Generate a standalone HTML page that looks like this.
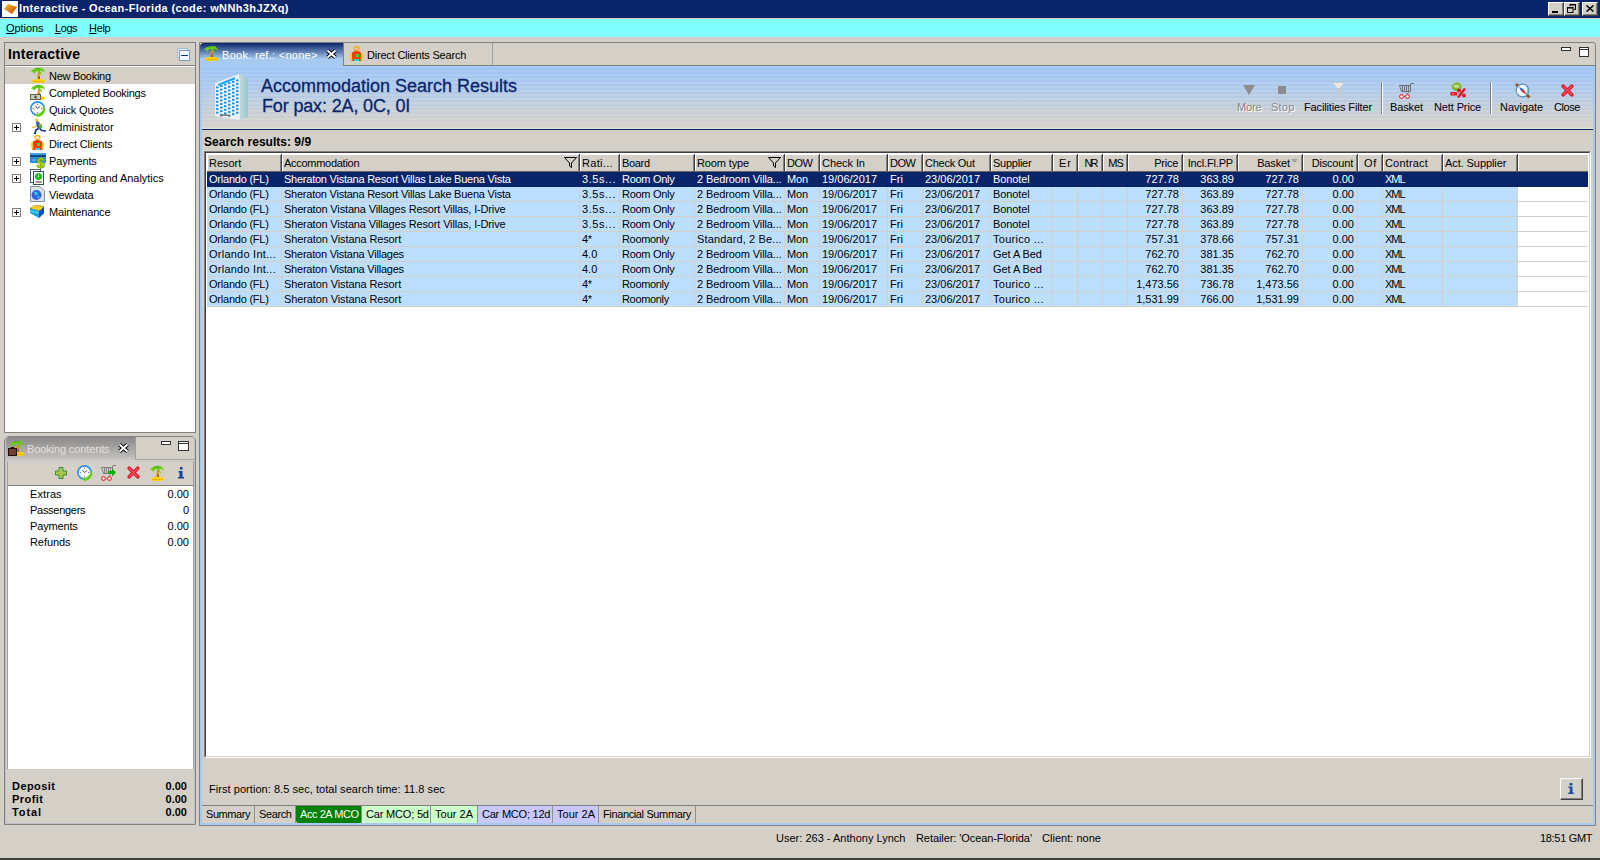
<!DOCTYPE html><html><head><meta charset="utf-8"><style>
*{margin:0;padding:0;box-sizing:border-box}
html,body{width:1600px;height:860px;overflow:hidden;background:#d4d0c8;font-family:"Liberation Sans",sans-serif;font-size:11px;color:#000}
.ab{position:absolute}
.t{position:absolute;white-space:pre;line-height:13px}
.ls{letter-spacing:-0.25px}
</style></head><body>
<div class="ab" style="left:0px;top:0px;width:1600px;height:18px;background:#0a246a"></div><div class="ab" style="left:0px;top:18px;width:1600px;height:1px;background:#d4d0c8"></div><div class="ab" style="left:2px;top:1px;width:16px;height:16px;background:#fff"></div><svg class="ab" style="left:3px;top:3px" width="14" height="12" viewBox="0 0 14 12"><defs><linearGradient id="tg" x1="0" y1="0" x2="1" y2="1"><stop offset="0" stop-color="#ffc020"/><stop offset="1" stop-color="#c04000"/></linearGradient></defs><path d="M1 6 L5 1 L14 4 L9 11 Z" fill="url(#tg)"/></svg><div class="t " style="left:19px;top:2px;color:#fff;font-weight:bold;font-size:11px;letter-spacing:0.38px">Interactive - Ocean-Florida (code: wNNh3hJZXq)</div><div class="ab" style="left:1548px;top:2px;width:16px;height:14px;background:#d4d0c8;border-top:1px solid #fff;border-left:1px solid #fff;border-right:1px solid #404040;border-bottom:1px solid #404040;box-shadow:inset -1px -1px 0 #808080"></div><div class="ab" style="left:1564px;top:2px;width:16px;height:14px;background:#d4d0c8;border-top:1px solid #fff;border-left:1px solid #fff;border-right:1px solid #404040;border-bottom:1px solid #404040;box-shadow:inset -1px -1px 0 #808080"></div><div class="ab" style="left:1582px;top:2px;width:16px;height:14px;background:#d4d0c8;border-top:1px solid #fff;border-left:1px solid #fff;border-right:1px solid #404040;border-bottom:1px solid #404040;box-shadow:inset -1px -1px 0 #808080"></div><div class="ab" style="left:1552px;top:11px;width:6px;height:2px;background:#000"></div><svg class="ab" style="left:1567px;top:4px" width="9" height="9" viewBox="0 0 9 9"><path d="M3 0.5 H8.5 V5.5 H7 M3 0 V2" stroke="#000" fill="none"/><rect x="3" y="0" width="6" height="1.5" fill="#000"/><rect x="0.5" y="3.5" width="5.5" height="5" fill="none" stroke="#000"/><rect x="0" y="3" width="6.5" height="1.5" fill="#000"/></svg><svg class="ab" style="left:1586px;top:5px" width="8" height="7" viewBox="0 0 8 7"><path d="M0.5 0.5 L7.5 6.5 M7.5 0.5 L0.5 6.5" stroke="#000" stroke-width="1.5"/></svg><div class="ab" style="left:0px;top:19px;width:1600px;height:18px;background:#80ffff"></div><div class="t " style="left:6px;top:22px;;letter-spacing:-0.07px"><u>O</u>ptions</div><div class="t " style="left:55px;top:22px;;letter-spacing:-0.42px"><u>L</u>ogs</div><div class="t " style="left:89px;top:22px;;letter-spacing:-0.31px"><u>H</u>elp</div><div class="ab" style="left:4px;top:42px;width:192px;height:391px;border:1px solid #808080;background:#fff"></div><div class="ab" style="left:5px;top:43px;width:190px;height:23px;background:#d4d0c8;border-bottom:1px solid #808080"></div><div class="t " style="left:8px;top:46px;font-weight:bold;font-size:14px;line-height:16px;letter-spacing:0.20px">Interactive</div><svg class="ab" style="left:177px;top:48px" width="13" height="13" viewBox="0 0 13 13"><rect x="0.5" y="0.5" width="10" height="9" fill="#dceaf8" stroke="#a8bcd8"/><rect x="2.5" y="2.5" width="10" height="10" fill="#eef6ff" stroke="#8898b8"/><path d="M4 7.5 H11" stroke="#0a3a80" stroke-width="1"/></svg><div class="ab" style="left:5px;top:67px;width:190px;height:17px;background:#d4d0c8"></div><div class="t " style="left:49px;top:70px;;letter-spacing:-0.28px">New Booking</div><svg class="ab" style="left:30px;top:67px" width="16" height="16" viewBox="0 0 16 16"><path d="M8 15 L9 5" stroke="#e09000" stroke-width="2"/><path d="M9 9 L9.5 12" stroke="#a04000" stroke-width="1"/><path d="M1 5 Q3 1 8 2 Q6 0 10 1 Q14 1 15 6 Q12 3 10 4 Q12 6 12 9 Q9 5 8 4 Q5 4 4 8 Q4 4 1 5Z" fill="#66cc11"/><path d="M5 2 Q8 1 10 2" stroke="#44aa00" stroke-width="1" fill="none"/><ellipse cx="8.5" cy="14" rx="7" ry="2" fill="#ffd400"/><path d="M3 14.5 H14" stroke="#f0b000" stroke-width="1"/></svg><div class="t " style="left:49px;top:87px;;letter-spacing:-0.27px">Completed Bookings</div><svg class="ab" style="left:30px;top:84px" width="16" height="16" viewBox="0 0 16 16"><path d="M8 15 L9 5" stroke="#e09000" stroke-width="2"/><path d="M9 9 L9.5 12" stroke="#a04000" stroke-width="1"/><path d="M1 5 Q3 1 8 2 Q6 0 10 1 Q14 1 15 6 Q12 3 10 4 Q12 6 12 9 Q9 5 8 4 Q5 4 4 8 Q4 4 1 5Z" fill="#66cc11"/><path d="M5 2 Q8 1 10 2" stroke="#44aa00" stroke-width="1" fill="none"/><ellipse cx="8.5" cy="14" rx="7" ry="2" fill="#ffd400"/><path d="M3 14.5 H14" stroke="#f0b000" stroke-width="1"/></svg><svg class="ab" style="left:30px;top:94px" width="11" height="6" viewBox="0 0 11 6"><rect x="0.5" y="0.5" width="10" height="5" fill="#c8ccb0" stroke="#606050"/><circle cx="5.5" cy="3" r="1.5" fill="#606050"/></svg><div class="t " style="left:49px;top:104px;;letter-spacing:-0.19px">Quick Quotes</div><svg class="ab" style="left:30px;top:101px" width="16" height="16" viewBox="0 0 16 16"><circle cx="7.5" cy="7.5" r="6.6" fill="#fff" stroke="#1e90ff" stroke-width="1.6"/><circle cx="7.5" cy="7.5" r="5.2" fill="#f6f6f6" stroke="#e8d8d0" stroke-width="0.6"/><path d="M7.5 2.8 V3.8 M7.5 11.2 V12.2 M2.8 7.5 H3.8 M11.2 7.5 H12.2" stroke="#505050" stroke-width="0.9"/><path d="M7.5 7.5 L5.5 5 M7.5 7.5 L10 5.5" stroke="#404040" stroke-width="0.9"/><path d="M4 12 Q9 15 13 9 L13.2 4.5 L15.5 9 Q13 15.5 8.5 15.8 L7.5 16 Z" fill="#60d010"/></svg><div class="t " style="left:49px;top:121px;;letter-spacing:-0.02px">Administrator</div><svg class="ab" style="left:30px;top:118px" width="16" height="16" viewBox="0 0 16 16"><path d="M4.5 1 L7.5 0.5 L8.5 3 L6 4Z" fill="#f8c820"/><path d="M6 3.5 L9 3.5 L11 9 L8.5 11 L6.5 8Z" fill="#4050b0"/><path d="M8.5 5 L11.5 6 L12.5 9 L10.5 11 L9 9Z" fill="#50b030"/><path d="M9 4 L10.5 5.5 L10 8" stroke="#e8c030" stroke-width="1" fill="none"/><path d="M2 9.5 L5 9 L6.5 7.5" stroke="#f8b020" stroke-width="1.2" fill="none"/><path d="M8.5 10.5 L6 12 L5 15.5 M9.5 10.5 L12 12.5 L16 13" stroke="#102890" stroke-width="1.6" fill="none"/><rect x="4" y="14.5" width="2" height="1.5" fill="#102890"/></svg><div class="ab" style="left:12px;top:123px;width:9px;height:9px;border:1px solid #808080;background:#fff"></div><div class="ab" style="left:14px;top:127px;width:5px;height:1px;background:#000"></div><div class="ab" style="left:16px;top:125px;width:1px;height:5px;background:#000"></div><div class="t " style="left:49px;top:138px;;letter-spacing:-0.14px">Direct Clients</div><svg class="ab" style="left:30px;top:135px" width="16" height="16" viewBox="0 0 16 16"><ellipse cx="7.5" cy="2.5" rx="2.5" ry="1.8" fill="none" stroke="#f8a800" stroke-width="1.2"/><path d="M2.5 8 Q3 5 7.5 5 Q12 5 12.5 8 L12.5 15 L2.5 15Z" fill="#ff3a00"/><path d="M1 9 Q1 6.5 2.5 6.5 L3.5 14.5 L1.5 13Z M14 9 Q14 6.5 12.5 6.5 L11.5 14.5 L13.5 13Z" fill="#ffd000"/><rect x="7" y="8" width="3" height="3" fill="#20e040"/><rect x="5" y="13" width="5" height="2" fill="#20d8d0"/></svg><div class="t " style="left:49px;top:155px;;letter-spacing:-0.16px">Payments</div><svg class="ab" style="left:30px;top:152px" width="17" height="17" viewBox="0 0 17 17"><rect x="0" y="1" width="16" height="10" rx="1" fill="#2b8be0"/><rect x="0" y="1" width="16" height="1.5" fill="#40a8f8"/><rect x="0" y="3" width="16" height="2" fill="#124a80"/><path d="M2 8 H6" stroke="#80c0f0"/><text x="6.5" y="15.5" font-family="Liberation Sans" font-weight="bold" font-size="15" fill="#b8e000" stroke="#6a9000" stroke-width="0.5">$</text></svg><div class="ab" style="left:12px;top:157px;width:9px;height:9px;border:1px solid #808080;background:#fff"></div><div class="ab" style="left:14px;top:161px;width:5px;height:1px;background:#000"></div><div class="ab" style="left:16px;top:159px;width:1px;height:5px;background:#000"></div><div class="t " style="left:49px;top:172px;;letter-spacing:-0.04px">Reporting and Analytics</div><svg class="ab" style="left:30px;top:169px" width="16" height="16" viewBox="0 0 16 16"><rect x="0.5" y="0.5" width="10" height="13" fill="#fff" stroke="#406070"/><rect x="3.5" y="2.5" width="10" height="13" fill="#fff" stroke="#305060"/><circle cx="8.5" cy="7.5" r="3.5" fill="#18c018"/><path d="M8.5 5.5 V8" stroke="#fff" stroke-width="1"/><path d="M5.5 13 H12" stroke="#503020" stroke-width="1"/></svg><div class="ab" style="left:12px;top:174px;width:9px;height:9px;border:1px solid #808080;background:#fff"></div><div class="ab" style="left:14px;top:178px;width:5px;height:1px;background:#000"></div><div class="ab" style="left:16px;top:176px;width:1px;height:5px;background:#000"></div><div class="t " style="left:49px;top:189px;;letter-spacing:-0.05px">Viewdata</div><svg class="ab" style="left:30px;top:186px" width="16" height="16" viewBox="0 0 16 16"><path d="M0.5 0.5 H10 L14.5 5 V15.5 H0.5Z" fill="#dde4f0" stroke="#8090a0"/><circle cx="6.5" cy="9" r="5" fill="#3060e0"/><path d="M4 6 Q6 5 8 7 Q7 10 5 9Z M8 9 Q10 10 9 13 Q7 12 8 9Z" fill="#30d0d0"/></svg><div class="t " style="left:49px;top:206px;;letter-spacing:-0.14px">Maintenance</div><svg class="ab" style="left:30px;top:203px" width="16" height="16" viewBox="0 0 16 16"><path d="M0 5 L5 2 L14 3 L14 10 L9 15 L0 10Z" fill="#1a9ae0"/><path d="M9 8 L14 4 L14 10 L9 15Z" fill="#0a50c0"/><path d="M0 5 L5 2 L14 3 L9 8Z" fill="#f8b000"/><path d="M2 5 L12 6 M3 3.5 L12 4.5" stroke="#ffe040" stroke-width="1"/><path d="M0 7 L9 9 L9 11 L0 9Z" fill="#40d0f0"/></svg><div class="ab" style="left:12px;top:208px;width:9px;height:9px;border:1px solid #808080;background:#fff"></div><div class="ab" style="left:14px;top:212px;width:5px;height:1px;background:#000"></div><div class="ab" style="left:16px;top:210px;width:1px;height:5px;background:#000"></div><div class="ab" style="left:4px;top:436px;width:192px;height:389px;border:1px solid #808080;border-radius:5px 5px 0 0;background:#d4d0c8"></div><div class="ab" style="left:5px;top:437px;width:190px;height:387px;border-left:1px solid #c0c0cc;border-right:1px solid #c0c0cc;border-bottom:1px solid #c0c0cc;border-radius:4px 4px 0 0;background:#d4d0c8"></div><div class="ab" style="left:6px;top:437px;width:130px;height:23px;background:linear-gradient(#8a8888,#b4b2b0 70%,#c8c6c2);border-radius:4px 0 0 0"></div><div class="ab" style="left:135px;top:459px;width:59px;height:1px;background:#a0a0a0"></div><div class="ab" style="left:135px;top:438px;width:1px;height:22px;background:#a0a0a0"></div><svg class="ab" style="left:9px;top:440px" width="16" height="16" viewBox="0 0 16 16"><path d="M8 15 L9 5" stroke="#e09000" stroke-width="2"/><path d="M9 9 L9.5 12" stroke="#a04000" stroke-width="1"/><path d="M1 5 Q3 1 8 2 Q6 0 10 1 Q14 1 15 6 Q12 3 10 4 Q12 6 12 9 Q9 5 8 4 Q5 4 4 8 Q4 4 1 5Z" fill="#66cc11"/><path d="M5 2 Q8 1 10 2" stroke="#44aa00" stroke-width="1" fill="none"/><ellipse cx="8.5" cy="14" rx="7" ry="2" fill="#ffd400"/><path d="M3 14.5 H14" stroke="#f0b000" stroke-width="1"/></svg><svg class="ab" style="left:8px;top:447px" width="9" height="9" viewBox="0 0 9 9"><rect x="0.5" y="1.5" width="8" height="7" fill="#704030" stroke="#201008"/><path d="M3 1.5 V0.5 H6 V1.5" stroke="#201008" fill="none"/></svg><div class="t " style="left:27px;top:443px;color:#e4e0da;letter-spacing:-0.12px">Booking contents</div><svg class="ab" style="left:118px;top:443px" width="11" height="10" viewBox="0 0 11 10"><path d="M1.5 1.5 L9.5 8.5 M9.5 1.5 L1.5 8.5" stroke="#000" stroke-width="3.8"/><path d="M1.5 1.5 L9.5 8.5 M9.5 1.5 L1.5 8.5" stroke="#fff" stroke-width="2"/></svg><div class="ab" style="left:161px;top:441px;width:10px;height:4px;border:1px solid #303030;background:#fff"></div><div class="ab" style="left:178px;top:441px;width:11px;height:10px;border:1px solid #303030;background:#fff;box-shadow:inset 0 1px 0 #fff,inset 0 2px 0 #303030"></div><div class="ab" style="left:7px;top:461px;width:187px;height:25px;border-top:1px solid #c8c8c8;border-left:1px solid #a0a0a0;border-right:1px solid #a0a0a0;border-bottom:1px solid #808080;background:#d4d0c8"></div><svg class="ab" style="left:55px;top:467px" width="12" height="12" viewBox="0 0 12 12"><path d="M4 0.5 H8 V4 H11.5 V8 H8 V11.5 H4 V8 H0.5 V4 H4Z" fill="#a8c848" stroke="#3a8a3a"/></svg><svg class="ab" style="left:77px;top:465px" width="16" height="16" viewBox="0 0 16 16"><circle cx="7.5" cy="7.5" r="6.6" fill="#fff" stroke="#1e90ff" stroke-width="1.6"/><circle cx="7.5" cy="7.5" r="5.2" fill="#f6f6f6" stroke="#e8d8d0" stroke-width="0.6"/><path d="M7.5 2.8 V3.8 M7.5 11.2 V12.2 M2.8 7.5 H3.8 M11.2 7.5 H12.2" stroke="#505050" stroke-width="0.9"/><path d="M7.5 7.5 L5.5 5 M7.5 7.5 L10 5.5" stroke="#404040" stroke-width="0.9"/><path d="M4 12 Q9 15 13 9 L13.2 4.5 L15.5 9 Q13 15.5 8.5 15.8 L7.5 16 Z" fill="#60d010"/></svg><svg class="ab" style="left:101px;top:465px" width="16" height="16" viewBox="0 0 16 16"><path d="M0.5 2.5 H11.5 V8.5 H2.5 Z" fill="none" stroke="#808080"/><path d="M3.5 3 V8 M5.5 3 V8 M7.5 3 V8 M9.5 3 V8" stroke="#808080"/><path d="M11.5 8.5 V1 L12 0.5 H15" stroke="#808080" fill="none"/><path d="M9.5 9 L8.5 11" stroke="#808080"/><circle cx="2.5" cy="13.5" r="1.9" fill="#fff" stroke="#e00000" stroke-width="1"/><circle cx="8.5" cy="13.5" r="1.9" fill="#fff" stroke="#e00000" stroke-width="1"/><path d="M4.2 13.5 H6.8" stroke="#808080"/><path d="M7 6 H11 V3.5 L15 7.5 L11 11.5 V9 H7Z" fill="#00b000"/></svg><svg class="ab" style="left:127px;top:466px" width="13" height="13" viewBox="0 0 13 13"><path d="M2.2 2.2 L10.8 10.8 M10.8 2.2 L2.2 10.8" stroke="#d81830" stroke-width="3.6" stroke-linecap="round"/><path d="M2.5 2.5 L10.5 10.5 M10.5 2.5 L2.5 10.5" stroke="#f04858" stroke-width="1.6" stroke-linecap="round"/></svg><svg class="ab" style="left:149px;top:465px" width="16" height="16" viewBox="0 0 16 16"><path d="M8 15 L9 5" stroke="#e09000" stroke-width="2"/><path d="M9 9 L9.5 12" stroke="#a04000" stroke-width="1"/><path d="M1 5 Q3 1 8 2 Q6 0 10 1 Q14 1 15 6 Q12 3 10 4 Q12 6 12 9 Q9 5 8 4 Q5 4 4 8 Q4 4 1 5Z" fill="#66cc11"/><path d="M5 2 Q8 1 10 2" stroke="#44aa00" stroke-width="1" fill="none"/><ellipse cx="8.5" cy="14" rx="7" ry="2" fill="#ffd400"/><path d="M3 14.5 H14" stroke="#f0b000" stroke-width="1"/></svg><svg class="ab" style="left:178px;top:467px" width="6" height="12" viewBox="0 0 6 12"><rect x="2" y="0" width="2.5" height="2.5" fill="#1040a0"/><path d="M0.5 4 H4.5 V10 H6 V11.5 H0 V10 H1.5 V5.5 H0.5Z" fill="#1040a0"/></svg><div class="ab" style="left:7px;top:486px;width:187px;height:283px;background:#fff;border-left:1px solid #a0a0a0;border-right:1px solid #a0a0a0"></div><div class="t " style="left:30px;top:488px;;letter-spacing:0.08px">Extras</div><div class="t " style="left:129px;top:488px;width:60px;text-align:right">0.00</div><div class="t " style="left:30px;top:504px;;letter-spacing:-0.28px">Passengers</div><div class="t " style="left:129px;top:504px;width:60px;text-align:right">0</div><div class="t " style="left:30px;top:520px;;letter-spacing:-0.16px">Payments</div><div class="t " style="left:129px;top:520px;width:60px;text-align:right">0.00</div><div class="t " style="left:30px;top:536px;;letter-spacing:-0.07px">Refunds</div><div class="t " style="left:129px;top:536px;width:60px;text-align:right">0.00</div><div class="t " style="left:12px;top:780px;font-weight:bold;letter-spacing:0.44px">Deposit</div><div class="t " style="left:127px;top:780px;font-weight:bold;width:60px;text-align:right">0.00</div><div class="t " style="left:12px;top:793px;font-weight:bold;letter-spacing:0.46px">Profit</div><div class="t " style="left:127px;top:793px;font-weight:bold;width:60px;text-align:right">0.00</div><div class="t " style="left:12px;top:806px;font-weight:bold;letter-spacing:0.88px">Total</div><div class="t " style="left:127px;top:806px;font-weight:bold;width:60px;text-align:right">0.00</div><div class="ab" style="left:199px;top:42px;width:1397px;height:784px;border:1px solid #808080;border-radius:0 3px 0 0;background:#d4d0c8"></div><div class="ab" style="left:200px;top:66px;width:1395px;height:759px;border:2px solid #a6caf0;border-top:none;background:#d4d0c8"></div><div class="ab" style="left:200px;top:43px;width:143px;height:23px;background:linear-gradient(#0a246a 0px,#a6caf0 16px,#a6caf0);border-radius:4px 0 0 0"></div><svg class="ab" style="left:203px;top:45px" width="16" height="16" viewBox="0 0 16 16"><path d="M8 15 L9 5" stroke="#e09000" stroke-width="2"/><path d="M9 9 L9.5 12" stroke="#a04000" stroke-width="1"/><path d="M1 5 Q3 1 8 2 Q6 0 10 1 Q14 1 15 6 Q12 3 10 4 Q12 6 12 9 Q9 5 8 4 Q5 4 4 8 Q4 4 1 5Z" fill="#66cc11"/><path d="M5 2 Q8 1 10 2" stroke="#44aa00" stroke-width="1" fill="none"/><ellipse cx="8.5" cy="14" rx="7" ry="2" fill="#ffd400"/><path d="M3 14.5 H14" stroke="#f0b000" stroke-width="1"/></svg><div class="t " style="left:222px;top:49px;color:#fff;letter-spacing:0.2px;letter-spacing:0.29px">Book. ref.: &lt;none&gt;</div><svg class="ab" style="left:326px;top:49px" width="11" height="10" viewBox="0 0 11 10"><path d="M1.5 1.5 L9.5 8.5 M9.5 1.5 L1.5 8.5" stroke="#000" stroke-width="3.8"/><path d="M1.5 1.5 L9.5 8.5 M9.5 1.5 L1.5 8.5" stroke="#fff" stroke-width="2"/></svg><div class="ab" style="left:343px;top:43px;width:1px;height:22px;background:#808080"></div><svg class="ab" style="left:349px;top:46px" width="16" height="16" viewBox="0 0 16 16"><ellipse cx="7.5" cy="2.5" rx="2.5" ry="1.8" fill="none" stroke="#f8a800" stroke-width="1.2"/><path d="M2.5 8 Q3 5 7.5 5 Q12 5 12.5 8 L12.5 15 L2.5 15Z" fill="#ff3a00"/><path d="M1 9 Q1 6.5 2.5 6.5 L3.5 14.5 L1.5 13Z M14 9 Q14 6.5 12.5 6.5 L11.5 14.5 L13.5 13Z" fill="#ffd000"/><rect x="7" y="8" width="3" height="3" fill="#20e040"/><rect x="5" y="13" width="5" height="2" fill="#20d8d0"/></svg><div class="t " style="left:367px;top:49px;;letter-spacing:-0.20px">Direct Clients Search</div><div class="ab" style="left:492px;top:43px;width:1px;height:22px;background:#a0a0a0"></div><div class="ab" style="left:343px;top:65px;width:1252px;height:1px;background:#808080"></div><div class="ab" style="left:1561px;top:47px;width:10px;height:4px;border:1px solid #303030;background:#fff"></div><div class="ab" style="left:1579px;top:47px;width:10px;height:10px;border:1px solid #303030;background:#fff;box-shadow:inset 0 1px 0 #fff,inset 0 2px 0 #303030"></div><div class="ab" style="left:202px;top:66px;width:1391px;height:63px;background:repeating-linear-gradient(rgba(255,255,255,0.05) 0 2px,rgba(0,0,0,0.02) 2px 4px),linear-gradient(#a0c8f8 0%,#b0ccf0 30%,#c0d0e2 55%,#d0d2d4 80%,#d8d4cc 100%)"></div><div class="ab" style="left:202px;top:128px;width:1391px;height:1px;background:#e6e2dc"></div><div class="ab" style="left:202px;top:129px;width:1391px;height:1px;background:#0a246a"></div><svg class="ab" style="left:214px;top:74px" width="34" height="46" viewBox="0 0 34 46"><defs><linearGradient id="bside" x1="0" y1="0" x2="1" y2="0"><stop offset="0" stop-color="#c8d8dc"/><stop offset="1" stop-color="#98c8d0"/></linearGradient></defs><path d="M1 9 L25 0 L25 46 L1 42Z" fill="#e8eef2"/><path d="M25 0 L34 5 L34 43 L25 46Z" fill="url(#bside)"/><path d="M4 10 L21 3 L21 5.5 L4 12Z" fill="#20a8f0"/><rect x="2" y="12.5" width="2.6" height="1.8" fill="#1890e0"/><rect x="2" y="16.1" width="2.6" height="1.8" fill="#1890e0"/><rect x="2" y="19.7" width="2.6" height="1.8" fill="#1890e0"/><rect x="2" y="23.3" width="2.6" height="1.8" fill="#1890e0"/><rect x="2" y="26.9" width="2.6" height="1.8" fill="#1890e0"/><rect x="2" y="30.5" width="2.6" height="1.8" fill="#1890e0"/><rect x="2" y="34.1" width="2.6" height="1.8" fill="#1890e0"/><rect x="2" y="37.7" width="2.6" height="1.8" fill="#1890e0"/><path d="M5.3 12.0 V43.0" stroke="#ffffff" stroke-width="0.8"/><rect x="6" y="11.1" width="2.6" height="1.8" fill="#1890e0"/><rect x="6" y="14.7" width="2.6" height="1.8" fill="#1890e0"/><rect x="6" y="18.3" width="2.6" height="1.8" fill="#1890e0"/><rect x="6" y="21.9" width="2.6" height="1.8" fill="#1890e0"/><rect x="6" y="25.5" width="2.6" height="1.8" fill="#1890e0"/><rect x="6" y="29.1" width="2.6" height="1.8" fill="#1890e0"/><rect x="6" y="32.7" width="2.6" height="1.8" fill="#1890e0"/><rect x="6" y="36.3" width="2.6" height="1.8" fill="#1890e0"/><rect x="6" y="39.9" width="2.6" height="1.8" fill="#1890e0"/><path d="M9.3 10.6 V43.5" stroke="#ffffff" stroke-width="0.8"/><rect x="10" y="9.7" width="2.6" height="1.8" fill="#1890e0"/><rect x="10" y="13.3" width="2.6" height="1.8" fill="#1890e0"/><rect x="10" y="16.9" width="2.6" height="1.8" fill="#1890e0"/><rect x="10" y="20.5" width="2.6" height="1.8" fill="#1890e0"/><rect x="10" y="24.1" width="2.6" height="1.8" fill="#1890e0"/><rect x="10" y="27.7" width="2.6" height="1.8" fill="#1890e0"/><rect x="10" y="31.3" width="2.6" height="1.8" fill="#1890e0"/><rect x="10" y="34.9" width="2.6" height="1.8" fill="#1890e0"/><rect x="10" y="38.5" width="2.6" height="1.8" fill="#1890e0"/><path d="M13.3 9.2 V44.0" stroke="#ffffff" stroke-width="0.8"/><rect x="14" y="8.3" width="2.6" height="1.8" fill="#1890e0"/><rect x="14" y="11.9" width="2.6" height="1.8" fill="#1890e0"/><rect x="14" y="15.5" width="2.6" height="1.8" fill="#1890e0"/><rect x="14" y="19.1" width="2.6" height="1.8" fill="#1890e0"/><rect x="14" y="22.7" width="2.6" height="1.8" fill="#1890e0"/><rect x="14" y="26.3" width="2.6" height="1.8" fill="#1890e0"/><rect x="14" y="29.9" width="2.6" height="1.8" fill="#1890e0"/><rect x="14" y="33.5" width="2.6" height="1.8" fill="#1890e0"/><rect x="14" y="37.1" width="2.6" height="1.8" fill="#1890e0"/><rect x="14" y="40.7" width="2.6" height="1.8" fill="#1890e0"/><path d="M17.3 7.8 V44.5" stroke="#ffffff" stroke-width="0.8"/><rect x="18" y="6.9" width="2.6" height="1.8" fill="#1890e0"/><rect x="18" y="10.5" width="2.6" height="1.8" fill="#1890e0"/><rect x="18" y="14.1" width="2.6" height="1.8" fill="#1890e0"/><rect x="18" y="17.7" width="2.6" height="1.8" fill="#1890e0"/><rect x="18" y="21.3" width="2.6" height="1.8" fill="#1890e0"/><rect x="18" y="24.9" width="2.6" height="1.8" fill="#1890e0"/><rect x="18" y="28.5" width="2.6" height="1.8" fill="#1890e0"/><rect x="18" y="32.1" width="2.6" height="1.8" fill="#1890e0"/><rect x="18" y="35.7" width="2.6" height="1.8" fill="#1890e0"/><rect x="18" y="39.3" width="2.6" height="1.8" fill="#1890e0"/><path d="M21.3 6.4 V45.0" stroke="#ffffff" stroke-width="0.8"/><rect x="22" y="5.5" width="2.6" height="1.8" fill="#1890e0"/><rect x="22" y="9.1" width="2.6" height="1.8" fill="#1890e0"/><rect x="22" y="12.7" width="2.6" height="1.8" fill="#1890e0"/><rect x="22" y="16.3" width="2.6" height="1.8" fill="#1890e0"/><rect x="22" y="19.9" width="2.6" height="1.8" fill="#1890e0"/><rect x="22" y="23.5" width="2.6" height="1.8" fill="#1890e0"/><rect x="22" y="27.1" width="2.6" height="1.8" fill="#1890e0"/><rect x="22" y="30.7" width="2.6" height="1.8" fill="#1890e0"/><rect x="22" y="34.3" width="2.6" height="1.8" fill="#1890e0"/><rect x="22" y="37.9" width="2.6" height="1.8" fill="#1890e0"/><path d="M25.3 5.0 V45.5" stroke="#ffffff" stroke-width="0.8"/><path d="M6 42 Q11 40 16 42" stroke="#707070" stroke-width="1.5" fill="none"/></svg><div class="t " style="left:261px;top:76px;font-size:18px;line-height:20px;color:#0a246a;-webkit-text-stroke:0.3px #0a246a">Accommodation Search Results</div><div class="t " style="left:262px;top:96px;font-size:18px;line-height:20px;color:#0a246a;letter-spacing:-0.15px;-webkit-text-stroke:0.3px #0a246a">For pax: 2A, 0C, 0I</div><div class="t " style="left:204px;top:135px;font-weight:bold;font-size:12px;line-height:14px;letter-spacing:0.02px">Search results: 9/9</div><div class="t " style="left:1237px;top:101px;text-shadow:1px 1px 0 #fff;color:#868686;;letter-spacing:-0.15px">More</div><div class="t " style="left:1271px;top:101px;text-shadow:1px 1px 0 #fff;color:#868686;;letter-spacing:0.21px">Stop</div><div class="t " style="left:1304px;top:101px;;letter-spacing:-0.14px">Facilities Filter</div><div class="t " style="left:1390px;top:101px;;letter-spacing:-0.13px">Basket</div><div class="t " style="left:1434px;top:101px;;letter-spacing:-0.12px">Nett Price</div><div class="t " style="left:1500px;top:101px;;letter-spacing:-0.03px">Navigate</div><div class="t " style="left:1554px;top:101px;;letter-spacing:-0.43px">Close</div><svg class="ab" style="left:1243px;top:85px" width="12" height="10" viewBox="0 0 12 10"><path d="M0 0 H12 L6 10Z" fill="#8c8c8c"/></svg><div class="ab" style="left:1278px;top:86px;width:8px;height:8px;background:#8c8c8c"></div><svg class="ab" style="left:1332px;top:82px" width="13" height="16" viewBox="0 0 13 16"><path d="M0 0 H13 L8 7 V16 L5 14 V7Z" fill="#c8c8c8"/><path d="M1 1 H12 L7.5 6 H5.5Z" fill="#e8e8e8"/></svg><div class="ab" style="left:1381px;top:82px;width:2px;height:32px;background:#808080;border-right:1px solid #fff"></div><svg class="ab" style="left:1399px;top:83px" width="16" height="16" viewBox="0 0 16 16"><path d="M0.5 2.5 H11.5 V8.5 H2.5 Z" fill="none" stroke="#707070"/><path d="M3.5 3 V8 M5.5 3 V8 M7.5 3 V8 M9.5 3 V8" stroke="#707070"/><path d="M11.5 8.5 V1 L12 0.5 H15" stroke="#707070" fill="none"/><path d="M9.5 9 L8.5 11" stroke="#707070"/><circle cx="2.5" cy="13.5" r="1.9" fill="#fff" stroke="#e00000" stroke-width="1"/><circle cx="8.5" cy="13.5" r="1.9" fill="#fff" stroke="#e00000" stroke-width="1"/><path d="M4.2 13.5 H6.8" stroke="#707070"/></svg><svg class="ab" style="left:1450px;top:82px" width="17" height="16" viewBox="0 0 17 16"><path d="M1.5 4 Q4 0 8 0.5 Q12 1.5 11.5 5 Q10 9 6 9 Q2 8.5 1.5 4Z" fill="#80b828"/><ellipse cx="6.5" cy="4.2" rx="3" ry="1.6" fill="#c0e088"/><rect x="0.5" y="10" width="6.5" height="3.5" fill="#e81020"/><rect x="2" y="11.2" width="2.5" height="1" fill="#ff9090"/><circle cx="9" cy="8.5" r="2" fill="#e81020"/><circle cx="14" cy="13.5" r="2" fill="#e81020"/><path d="M15 6.5 L8 15.5" stroke="#e81020" stroke-width="2.4"/></svg><div class="ab" style="left:1490px;top:82px;width:2px;height:32px;background:#808080;border-right:1px solid #fff"></div><svg class="ab" style="left:1514px;top:82px" width="17" height="17" viewBox="0 0 17 17"><circle cx="8.5" cy="8.5" r="6.3" fill="#f2f6fa" stroke="#5a90c8" stroke-width="1.2"/><path d="M13 5 A5 5 0 0 1 12 12" stroke="#30c8f0" stroke-width="1.2" fill="none"/><path d="M4.8 4.8 L9.8 7.6 L7.6 9.8Z" fill="#2068d0"/><path d="M12.4 12.4 L9.8 7.6 L7.6 9.8Z" fill="#f02010"/><path d="M1 3 L3 1 L5 3 L3 5Z" fill="#8a5a20"/><path d="M12 14 L14 12 L16.5 14.5 L14.5 16.5Z" fill="#8a5a20"/></svg><svg class="ab" style="left:1561px;top:84px" width="13" height="13" viewBox="0 0 13 13"><path d="M2.2 2.2 L10.8 10.8 M10.8 2.2 L2.2 10.8" stroke="#d81830" stroke-width="3.6" stroke-linecap="round"/><path d="M2.5 2.5 L10.5 10.5 M10.5 2.5 L2.5 10.5" stroke="#f04858" stroke-width="1.6" stroke-linecap="round"/></svg><div class="ab" style="left:204px;top:151px;width:1387px;height:607px;border-top:1px solid #808080;border-left:1px solid #808080;border-right:1px solid #fff;border-bottom:1px solid #fff;background:#fff"></div><div class="ab" style="left:205px;top:152px;width:1385px;height:605px;border-top:1px solid #404040;border-left:1px solid #404040;border-right:1px solid #d4d0c8;border-bottom:1px solid #d4d0c8;background:#fff"></div><div class="ab" style="left:206px;top:153px;width:1382px;height:2px;background:#fff"></div><div class="ab" style="left:206px;top:153px;width:1px;height:19px;background:#fff"></div><div class="ab" style="left:207px;top:154px;width:75px;height:18px;background:#d4d0c8;border-top:1px solid #fff;border-left:1px solid #fff;border-bottom:1px solid #9a968e"></div><div class="ab" style="left:280px;top:155px;width:1px;height:16px;background:#808080"></div><div class="ab" style="left:281px;top:154px;width:1px;height:18px;background:#404040"></div><div class="ab" style="left:207px;top:171px;width:75px;height:1px;background:#686460"></div><div class="t " style="left:209px;top:157px;;letter-spacing:-0.03px">Resort</div><div class="ab" style="left:282px;top:154px;width:298px;height:18px;background:#d4d0c8;border-top:1px solid #fff;border-left:1px solid #fff;border-bottom:1px solid #9a968e"></div><div class="ab" style="left:578px;top:155px;width:1px;height:16px;background:#808080"></div><div class="ab" style="left:579px;top:154px;width:1px;height:18px;background:#404040"></div><div class="ab" style="left:282px;top:171px;width:298px;height:1px;background:#686460"></div><div class="t " style="left:284px;top:157px;;letter-spacing:-0.28px">Accommodation</div><div class="ab" style="left:580px;top:154px;width:40px;height:18px;background:#d4d0c8;border-top:1px solid #fff;border-left:1px solid #fff;border-bottom:1px solid #9a968e"></div><div class="ab" style="left:618px;top:155px;width:1px;height:16px;background:#808080"></div><div class="ab" style="left:619px;top:154px;width:1px;height:18px;background:#404040"></div><div class="ab" style="left:580px;top:171px;width:40px;height:1px;background:#686460"></div><div class="t " style="left:582px;top:157px;;letter-spacing:0.31px">Rati...</div><div class="ab" style="left:620px;top:154px;width:75px;height:18px;background:#d4d0c8;border-top:1px solid #fff;border-left:1px solid #fff;border-bottom:1px solid #9a968e"></div><div class="ab" style="left:693px;top:155px;width:1px;height:16px;background:#808080"></div><div class="ab" style="left:694px;top:154px;width:1px;height:18px;background:#404040"></div><div class="ab" style="left:620px;top:171px;width:75px;height:1px;background:#686460"></div><div class="t " style="left:622px;top:157px;;letter-spacing:-0.32px">Board</div><div class="ab" style="left:695px;top:154px;width:90px;height:18px;background:#d4d0c8;border-top:1px solid #fff;border-left:1px solid #fff;border-bottom:1px solid #9a968e"></div><div class="ab" style="left:783px;top:155px;width:1px;height:16px;background:#808080"></div><div class="ab" style="left:784px;top:154px;width:1px;height:18px;background:#404040"></div><div class="ab" style="left:695px;top:171px;width:90px;height:1px;background:#686460"></div><div class="t " style="left:697px;top:157px;;letter-spacing:-0.13px">Room type</div><div class="ab" style="left:785px;top:154px;width:35px;height:18px;background:#d4d0c8;border-top:1px solid #fff;border-left:1px solid #fff;border-bottom:1px solid #9a968e"></div><div class="ab" style="left:818px;top:155px;width:1px;height:16px;background:#808080"></div><div class="ab" style="left:819px;top:154px;width:1px;height:18px;background:#404040"></div><div class="ab" style="left:785px;top:171px;width:35px;height:1px;background:#686460"></div><div class="t " style="left:787px;top:157px;;letter-spacing:-0.44px">DOW</div><div class="ab" style="left:820px;top:154px;width:68px;height:18px;background:#d4d0c8;border-top:1px solid #fff;border-left:1px solid #fff;border-bottom:1px solid #9a968e"></div><div class="ab" style="left:886px;top:155px;width:1px;height:16px;background:#808080"></div><div class="ab" style="left:887px;top:154px;width:1px;height:18px;background:#404040"></div><div class="ab" style="left:820px;top:171px;width:68px;height:1px;background:#686460"></div><div class="t " style="left:822px;top:157px;;letter-spacing:-0.06px">Check In</div><div class="ab" style="left:888px;top:154px;width:35px;height:18px;background:#d4d0c8;border-top:1px solid #fff;border-left:1px solid #fff;border-bottom:1px solid #9a968e"></div><div class="ab" style="left:921px;top:155px;width:1px;height:16px;background:#808080"></div><div class="ab" style="left:922px;top:154px;width:1px;height:18px;background:#404040"></div><div class="ab" style="left:888px;top:171px;width:35px;height:1px;background:#686460"></div><div class="t " style="left:890px;top:157px;;letter-spacing:-0.44px">DOW</div><div class="ab" style="left:923px;top:154px;width:68px;height:18px;background:#d4d0c8;border-top:1px solid #fff;border-left:1px solid #fff;border-bottom:1px solid #9a968e"></div><div class="ab" style="left:989px;top:155px;width:1px;height:16px;background:#808080"></div><div class="ab" style="left:990px;top:154px;width:1px;height:18px;background:#404040"></div><div class="ab" style="left:923px;top:171px;width:68px;height:1px;background:#686460"></div><div class="t ls" style="left:925px;top:157px;">Check Out</div><div class="ab" style="left:991px;top:154px;width:62px;height:18px;background:#d4d0c8;border-top:1px solid #fff;border-left:1px solid #fff;border-bottom:1px solid #9a968e"></div><div class="ab" style="left:1051px;top:155px;width:1px;height:16px;background:#808080"></div><div class="ab" style="left:1052px;top:154px;width:1px;height:18px;background:#404040"></div><div class="ab" style="left:991px;top:171px;width:62px;height:1px;background:#686460"></div><div class="t ls" style="left:993px;top:157px;">Supplier</div><div class="ab" style="left:1053px;top:154px;width:25px;height:18px;background:#d4d0c8;border-top:1px solid #fff;border-left:1px solid #fff;border-bottom:1px solid #9a968e"></div><div class="ab" style="left:1076px;top:155px;width:1px;height:16px;background:#808080"></div><div class="ab" style="left:1077px;top:154px;width:1px;height:18px;background:#404040"></div><div class="ab" style="left:1053px;top:171px;width:25px;height:1px;background:#686460"></div><div class="t " style="left:1053px;top:157px;width:25px;text-align:center;letter-spacing:1.00px">Er</div><div class="ab" style="left:1078px;top:154px;width:25px;height:18px;background:#d4d0c8;border-top:1px solid #fff;border-left:1px solid #fff;border-bottom:1px solid #9a968e"></div><div class="ab" style="left:1101px;top:155px;width:1px;height:16px;background:#808080"></div><div class="ab" style="left:1102px;top:154px;width:1px;height:18px;background:#404040"></div><div class="ab" style="left:1078px;top:171px;width:25px;height:1px;background:#686460"></div><div class="t " style="left:1078px;top:157px;width:25px;text-align:center;letter-spacing:-1.88px">NR</div><div class="ab" style="left:1103px;top:154px;width:25px;height:18px;background:#d4d0c8;border-top:1px solid #fff;border-left:1px solid #fff;border-bottom:1px solid #9a968e"></div><div class="ab" style="left:1126px;top:155px;width:1px;height:16px;background:#808080"></div><div class="ab" style="left:1127px;top:154px;width:1px;height:18px;background:#404040"></div><div class="ab" style="left:1103px;top:171px;width:25px;height:1px;background:#686460"></div><div class="t " style="left:1103px;top:157px;width:25px;text-align:center;letter-spacing:-1.00px">MS</div><div class="ab" style="left:1128px;top:154px;width:55px;height:18px;background:#d4d0c8;border-top:1px solid #fff;border-left:1px solid #fff;border-bottom:1px solid #9a968e"></div><div class="ab" style="left:1181px;top:155px;width:1px;height:16px;background:#808080"></div><div class="ab" style="left:1182px;top:154px;width:1px;height:18px;background:#404040"></div><div class="ab" style="left:1128px;top:171px;width:55px;height:1px;background:#686460"></div><div class="t " style="left:1128px;top:157px;width:50px;text-align:right;letter-spacing:-0.27px">Price</div><div class="ab" style="left:1183px;top:154px;width:55px;height:18px;background:#d4d0c8;border-top:1px solid #fff;border-left:1px solid #fff;border-bottom:1px solid #9a968e"></div><div class="ab" style="left:1236px;top:155px;width:1px;height:16px;background:#808080"></div><div class="ab" style="left:1237px;top:154px;width:1px;height:18px;background:#404040"></div><div class="ab" style="left:1183px;top:171px;width:55px;height:1px;background:#686460"></div><div class="t " style="left:1183px;top:157px;width:50px;text-align:right;letter-spacing:-0.18px">Incl.Fl.PP</div><div class="ab" style="left:1238px;top:154px;width:65px;height:18px;background:#d4d0c8;border-top:1px solid #fff;border-left:1px solid #fff;border-bottom:1px solid #9a968e"></div><div class="ab" style="left:1301px;top:155px;width:1px;height:16px;background:#808080"></div><div class="ab" style="left:1302px;top:154px;width:1px;height:18px;background:#404040"></div><div class="ab" style="left:1238px;top:171px;width:65px;height:1px;background:#686460"></div><div class="t " style="left:1238px;top:157px;width:52px;text-align:right;letter-spacing:-0.13px">Basket</div><div class="ab" style="left:1303px;top:154px;width:55px;height:18px;background:#d4d0c8;border-top:1px solid #fff;border-left:1px solid #fff;border-bottom:1px solid #9a968e"></div><div class="ab" style="left:1356px;top:155px;width:1px;height:16px;background:#808080"></div><div class="ab" style="left:1357px;top:154px;width:1px;height:18px;background:#404040"></div><div class="ab" style="left:1303px;top:171px;width:55px;height:1px;background:#686460"></div><div class="t " style="left:1303px;top:157px;width:50px;text-align:right;letter-spacing:-0.19px">Discount</div><div class="ab" style="left:1358px;top:154px;width:25px;height:18px;background:#d4d0c8;border-top:1px solid #fff;border-left:1px solid #fff;border-bottom:1px solid #9a968e"></div><div class="ab" style="left:1381px;top:155px;width:1px;height:16px;background:#808080"></div><div class="ab" style="left:1382px;top:154px;width:1px;height:18px;background:#404040"></div><div class="ab" style="left:1358px;top:171px;width:25px;height:1px;background:#686460"></div><div class="t " style="left:1358px;top:157px;width:25px;text-align:center;letter-spacing:0.62px">Of</div><div class="ab" style="left:1383px;top:154px;width:60px;height:18px;background:#d4d0c8;border-top:1px solid #fff;border-left:1px solid #fff;border-bottom:1px solid #9a968e"></div><div class="ab" style="left:1441px;top:155px;width:1px;height:16px;background:#808080"></div><div class="ab" style="left:1442px;top:154px;width:1px;height:18px;background:#404040"></div><div class="ab" style="left:1383px;top:171px;width:60px;height:1px;background:#686460"></div><div class="t " style="left:1385px;top:157px;;letter-spacing:0.17px">Contract</div><div class="ab" style="left:1443px;top:154px;width:75px;height:18px;background:#d4d0c8;border-top:1px solid #fff;border-left:1px solid #fff;border-bottom:1px solid #9a968e"></div><div class="ab" style="left:1516px;top:155px;width:1px;height:16px;background:#808080"></div><div class="ab" style="left:1517px;top:154px;width:1px;height:18px;background:#404040"></div><div class="ab" style="left:1443px;top:171px;width:75px;height:1px;background:#686460"></div><div class="t " style="left:1445px;top:157px;;letter-spacing:-0.08px">Act. Supplier</div><div class="ab" style="left:1518px;top:154px;width:70px;height:18px;background:#d4d0c8;border-top:1px solid #fff;border-left:1px solid #fff;border-bottom:1px solid #9a968e"></div><div class="ab" style="left:1518px;top:171px;width:70px;height:1px;background:#686460"></div><svg class="ab" style="left:564px;top:157px" width="13" height="11" viewBox="0 0 13 11"><path d="M0.5 0.5 H12.5 L7.5 6 V10.5 L5.5 9 V6Z" fill="none" stroke="#000"/></svg><svg class="ab" style="left:768px;top:157px" width="13" height="11" viewBox="0 0 13 11"><path d="M0.5 0.5 H12.5 L7.5 6 V10.5 L5.5 9 V6Z" fill="none" stroke="#000"/></svg><svg class="ab" style="left:1291px;top:159px" width="7" height="4" viewBox="0 0 7 4"><path d="M0 0 H7 L3.5 4Z" fill="#a0a0a0"/></svg><div class="ab" style="left:207px;top:172px;width:1381px;height:15px;background:#0a246a"></div><div class="t " style="left:209px;top:172px;line-height:14px;color:#fff;letter-spacing:-0.22px">Orlando (FL)</div><div class="t " style="left:284px;top:172px;line-height:14px;color:#fff;letter-spacing:-0.24px">Sheraton Vistana Resort Villas Lake Buena Vista</div><div class="t " style="left:582px;top:172px;line-height:14px;color:#fff;letter-spacing:0.58px">3.5s...</div><div class="t " style="left:622px;top:172px;line-height:14px;color:#fff;letter-spacing:-0.29px">Room Only</div><div class="t " style="left:697px;top:172px;line-height:14px;color:#fff;letter-spacing:-0.11px">2 Bedroom Villa...</div><div class="t " style="left:787px;top:172px;line-height:14px;color:#fff;letter-spacing:-0.20px">Mon</div><div class="t " style="left:822px;top:172px;line-height:14px;color:#fff">19/06/2017</div><div class="t " style="left:890px;top:172px;line-height:14px;color:#fff;letter-spacing:0.09px">Fri</div><div class="t " style="left:925px;top:172px;line-height:14px;color:#fff">23/06/2017</div><div class="t " style="left:993px;top:172px;line-height:14px;color:#fff;letter-spacing:-0.10px">Bonotel</div><div class="t " style="left:1127px;top:172px;width:52px;text-align:right;line-height:14px;color:#fff">727.78</div><div class="t " style="left:1182px;top:172px;width:52px;text-align:right;line-height:14px;color:#fff">363.89</div><div class="t " style="left:1237px;top:172px;width:62px;text-align:right;line-height:14px;color:#fff">727.78</div><div class="t " style="left:1302px;top:172px;width:52px;text-align:right;line-height:14px;color:#fff">0.00</div><div class="t " style="left:1385px;top:172px;line-height:14px;color:#fff;letter-spacing:-1.06px">XML</div><div class="ab" style="left:207px;top:187px;width:1310px;height:15px;background:#bddfff"></div><div class="ab" style="left:207px;top:201px;width:1381px;height:1px;background:#d4d0c8"></div><div class="ab" style="left:281px;top:187px;width:1px;height:15px;background:#d4d0c8"></div><div class="ab" style="left:579px;top:187px;width:1px;height:15px;background:#d4d0c8"></div><div class="ab" style="left:619px;top:187px;width:1px;height:15px;background:#d4d0c8"></div><div class="ab" style="left:694px;top:187px;width:1px;height:15px;background:#d4d0c8"></div><div class="ab" style="left:784px;top:187px;width:1px;height:15px;background:#d4d0c8"></div><div class="ab" style="left:819px;top:187px;width:1px;height:15px;background:#d4d0c8"></div><div class="ab" style="left:887px;top:187px;width:1px;height:15px;background:#d4d0c8"></div><div class="ab" style="left:922px;top:187px;width:1px;height:15px;background:#d4d0c8"></div><div class="ab" style="left:990px;top:187px;width:1px;height:15px;background:#d4d0c8"></div><div class="ab" style="left:1052px;top:187px;width:1px;height:15px;background:#d4d0c8"></div><div class="ab" style="left:1077px;top:187px;width:1px;height:15px;background:#d4d0c8"></div><div class="ab" style="left:1102px;top:187px;width:1px;height:15px;background:#d4d0c8"></div><div class="ab" style="left:1127px;top:187px;width:1px;height:15px;background:#d4d0c8"></div><div class="ab" style="left:1182px;top:187px;width:1px;height:15px;background:#d4d0c8"></div><div class="ab" style="left:1237px;top:187px;width:1px;height:15px;background:#d4d0c8"></div><div class="ab" style="left:1302px;top:187px;width:1px;height:15px;background:#d4d0c8"></div><div class="ab" style="left:1357px;top:187px;width:1px;height:15px;background:#d4d0c8"></div><div class="ab" style="left:1382px;top:187px;width:1px;height:15px;background:#d4d0c8"></div><div class="ab" style="left:1442px;top:187px;width:1px;height:15px;background:#d4d0c8"></div><div class="ab" style="left:1517px;top:187px;width:1px;height:15px;background:#d4d0c8"></div><div class="t " style="left:209px;top:187px;line-height:14px;color:#000;letter-spacing:-0.22px">Orlando (FL)</div><div class="t " style="left:284px;top:187px;line-height:14px;color:#000;letter-spacing:-0.24px">Sheraton Vistana Resort Villas Lake Buena Vista</div><div class="t " style="left:582px;top:187px;line-height:14px;color:#000;letter-spacing:0.58px">3.5s...</div><div class="t " style="left:622px;top:187px;line-height:14px;color:#000;letter-spacing:-0.29px">Room Only</div><div class="t " style="left:697px;top:187px;line-height:14px;color:#000;letter-spacing:-0.11px">2 Bedroom Villa...</div><div class="t " style="left:787px;top:187px;line-height:14px;color:#000;letter-spacing:-0.20px">Mon</div><div class="t " style="left:822px;top:187px;line-height:14px;color:#000">19/06/2017</div><div class="t " style="left:890px;top:187px;line-height:14px;color:#000;letter-spacing:0.09px">Fri</div><div class="t " style="left:925px;top:187px;line-height:14px;color:#000">23/06/2017</div><div class="t " style="left:993px;top:187px;line-height:14px;color:#000;letter-spacing:-0.10px">Bonotel</div><div class="t " style="left:1127px;top:187px;width:52px;text-align:right;line-height:14px;color:#000">727.78</div><div class="t " style="left:1182px;top:187px;width:52px;text-align:right;line-height:14px;color:#000">363.89</div><div class="t " style="left:1237px;top:187px;width:62px;text-align:right;line-height:14px;color:#000">727.78</div><div class="t " style="left:1302px;top:187px;width:52px;text-align:right;line-height:14px;color:#000">0.00</div><div class="t " style="left:1385px;top:187px;line-height:14px;color:#000;letter-spacing:-1.06px">XML</div><div class="ab" style="left:207px;top:202px;width:1310px;height:15px;background:#bddfff"></div><div class="ab" style="left:207px;top:216px;width:1381px;height:1px;background:#d4d0c8"></div><div class="ab" style="left:281px;top:202px;width:1px;height:15px;background:#d4d0c8"></div><div class="ab" style="left:579px;top:202px;width:1px;height:15px;background:#d4d0c8"></div><div class="ab" style="left:619px;top:202px;width:1px;height:15px;background:#d4d0c8"></div><div class="ab" style="left:694px;top:202px;width:1px;height:15px;background:#d4d0c8"></div><div class="ab" style="left:784px;top:202px;width:1px;height:15px;background:#d4d0c8"></div><div class="ab" style="left:819px;top:202px;width:1px;height:15px;background:#d4d0c8"></div><div class="ab" style="left:887px;top:202px;width:1px;height:15px;background:#d4d0c8"></div><div class="ab" style="left:922px;top:202px;width:1px;height:15px;background:#d4d0c8"></div><div class="ab" style="left:990px;top:202px;width:1px;height:15px;background:#d4d0c8"></div><div class="ab" style="left:1052px;top:202px;width:1px;height:15px;background:#d4d0c8"></div><div class="ab" style="left:1077px;top:202px;width:1px;height:15px;background:#d4d0c8"></div><div class="ab" style="left:1102px;top:202px;width:1px;height:15px;background:#d4d0c8"></div><div class="ab" style="left:1127px;top:202px;width:1px;height:15px;background:#d4d0c8"></div><div class="ab" style="left:1182px;top:202px;width:1px;height:15px;background:#d4d0c8"></div><div class="ab" style="left:1237px;top:202px;width:1px;height:15px;background:#d4d0c8"></div><div class="ab" style="left:1302px;top:202px;width:1px;height:15px;background:#d4d0c8"></div><div class="ab" style="left:1357px;top:202px;width:1px;height:15px;background:#d4d0c8"></div><div class="ab" style="left:1382px;top:202px;width:1px;height:15px;background:#d4d0c8"></div><div class="ab" style="left:1442px;top:202px;width:1px;height:15px;background:#d4d0c8"></div><div class="ab" style="left:1517px;top:202px;width:1px;height:15px;background:#d4d0c8"></div><div class="t " style="left:209px;top:202px;line-height:14px;color:#000;letter-spacing:-0.22px">Orlando (FL)</div><div class="t " style="left:284px;top:202px;line-height:14px;color:#000;letter-spacing:-0.15px">Sheraton Vistana Villages Resort Villas, I-Drive</div><div class="t " style="left:582px;top:202px;line-height:14px;color:#000;letter-spacing:0.58px">3.5s...</div><div class="t " style="left:622px;top:202px;line-height:14px;color:#000;letter-spacing:-0.29px">Room Only</div><div class="t " style="left:697px;top:202px;line-height:14px;color:#000;letter-spacing:-0.11px">2 Bedroom Villa...</div><div class="t " style="left:787px;top:202px;line-height:14px;color:#000;letter-spacing:-0.20px">Mon</div><div class="t " style="left:822px;top:202px;line-height:14px;color:#000">19/06/2017</div><div class="t " style="left:890px;top:202px;line-height:14px;color:#000;letter-spacing:0.09px">Fri</div><div class="t " style="left:925px;top:202px;line-height:14px;color:#000">23/06/2017</div><div class="t " style="left:993px;top:202px;line-height:14px;color:#000;letter-spacing:-0.10px">Bonotel</div><div class="t " style="left:1127px;top:202px;width:52px;text-align:right;line-height:14px;color:#000">727.78</div><div class="t " style="left:1182px;top:202px;width:52px;text-align:right;line-height:14px;color:#000">363.89</div><div class="t " style="left:1237px;top:202px;width:62px;text-align:right;line-height:14px;color:#000">727.78</div><div class="t " style="left:1302px;top:202px;width:52px;text-align:right;line-height:14px;color:#000">0.00</div><div class="t " style="left:1385px;top:202px;line-height:14px;color:#000;letter-spacing:-1.06px">XML</div><div class="ab" style="left:207px;top:217px;width:1310px;height:15px;background:#bddfff"></div><div class="ab" style="left:207px;top:231px;width:1381px;height:1px;background:#d4d0c8"></div><div class="ab" style="left:281px;top:217px;width:1px;height:15px;background:#d4d0c8"></div><div class="ab" style="left:579px;top:217px;width:1px;height:15px;background:#d4d0c8"></div><div class="ab" style="left:619px;top:217px;width:1px;height:15px;background:#d4d0c8"></div><div class="ab" style="left:694px;top:217px;width:1px;height:15px;background:#d4d0c8"></div><div class="ab" style="left:784px;top:217px;width:1px;height:15px;background:#d4d0c8"></div><div class="ab" style="left:819px;top:217px;width:1px;height:15px;background:#d4d0c8"></div><div class="ab" style="left:887px;top:217px;width:1px;height:15px;background:#d4d0c8"></div><div class="ab" style="left:922px;top:217px;width:1px;height:15px;background:#d4d0c8"></div><div class="ab" style="left:990px;top:217px;width:1px;height:15px;background:#d4d0c8"></div><div class="ab" style="left:1052px;top:217px;width:1px;height:15px;background:#d4d0c8"></div><div class="ab" style="left:1077px;top:217px;width:1px;height:15px;background:#d4d0c8"></div><div class="ab" style="left:1102px;top:217px;width:1px;height:15px;background:#d4d0c8"></div><div class="ab" style="left:1127px;top:217px;width:1px;height:15px;background:#d4d0c8"></div><div class="ab" style="left:1182px;top:217px;width:1px;height:15px;background:#d4d0c8"></div><div class="ab" style="left:1237px;top:217px;width:1px;height:15px;background:#d4d0c8"></div><div class="ab" style="left:1302px;top:217px;width:1px;height:15px;background:#d4d0c8"></div><div class="ab" style="left:1357px;top:217px;width:1px;height:15px;background:#d4d0c8"></div><div class="ab" style="left:1382px;top:217px;width:1px;height:15px;background:#d4d0c8"></div><div class="ab" style="left:1442px;top:217px;width:1px;height:15px;background:#d4d0c8"></div><div class="ab" style="left:1517px;top:217px;width:1px;height:15px;background:#d4d0c8"></div><div class="t " style="left:209px;top:217px;line-height:14px;color:#000;letter-spacing:-0.22px">Orlando (FL)</div><div class="t " style="left:284px;top:217px;line-height:14px;color:#000;letter-spacing:-0.15px">Sheraton Vistana Villages Resort Villas, I-Drive</div><div class="t " style="left:582px;top:217px;line-height:14px;color:#000;letter-spacing:0.58px">3.5s...</div><div class="t " style="left:622px;top:217px;line-height:14px;color:#000;letter-spacing:-0.29px">Room Only</div><div class="t " style="left:697px;top:217px;line-height:14px;color:#000;letter-spacing:-0.11px">2 Bedroom Villa...</div><div class="t " style="left:787px;top:217px;line-height:14px;color:#000;letter-spacing:-0.20px">Mon</div><div class="t " style="left:822px;top:217px;line-height:14px;color:#000">19/06/2017</div><div class="t " style="left:890px;top:217px;line-height:14px;color:#000;letter-spacing:0.09px">Fri</div><div class="t " style="left:925px;top:217px;line-height:14px;color:#000">23/06/2017</div><div class="t " style="left:993px;top:217px;line-height:14px;color:#000;letter-spacing:-0.10px">Bonotel</div><div class="t " style="left:1127px;top:217px;width:52px;text-align:right;line-height:14px;color:#000">727.78</div><div class="t " style="left:1182px;top:217px;width:52px;text-align:right;line-height:14px;color:#000">363.89</div><div class="t " style="left:1237px;top:217px;width:62px;text-align:right;line-height:14px;color:#000">727.78</div><div class="t " style="left:1302px;top:217px;width:52px;text-align:right;line-height:14px;color:#000">0.00</div><div class="t " style="left:1385px;top:217px;line-height:14px;color:#000;letter-spacing:-1.06px">XML</div><div class="ab" style="left:207px;top:232px;width:1310px;height:15px;background:#bddfff"></div><div class="ab" style="left:207px;top:246px;width:1381px;height:1px;background:#d4d0c8"></div><div class="ab" style="left:281px;top:232px;width:1px;height:15px;background:#d4d0c8"></div><div class="ab" style="left:579px;top:232px;width:1px;height:15px;background:#d4d0c8"></div><div class="ab" style="left:619px;top:232px;width:1px;height:15px;background:#d4d0c8"></div><div class="ab" style="left:694px;top:232px;width:1px;height:15px;background:#d4d0c8"></div><div class="ab" style="left:784px;top:232px;width:1px;height:15px;background:#d4d0c8"></div><div class="ab" style="left:819px;top:232px;width:1px;height:15px;background:#d4d0c8"></div><div class="ab" style="left:887px;top:232px;width:1px;height:15px;background:#d4d0c8"></div><div class="ab" style="left:922px;top:232px;width:1px;height:15px;background:#d4d0c8"></div><div class="ab" style="left:990px;top:232px;width:1px;height:15px;background:#d4d0c8"></div><div class="ab" style="left:1052px;top:232px;width:1px;height:15px;background:#d4d0c8"></div><div class="ab" style="left:1077px;top:232px;width:1px;height:15px;background:#d4d0c8"></div><div class="ab" style="left:1102px;top:232px;width:1px;height:15px;background:#d4d0c8"></div><div class="ab" style="left:1127px;top:232px;width:1px;height:15px;background:#d4d0c8"></div><div class="ab" style="left:1182px;top:232px;width:1px;height:15px;background:#d4d0c8"></div><div class="ab" style="left:1237px;top:232px;width:1px;height:15px;background:#d4d0c8"></div><div class="ab" style="left:1302px;top:232px;width:1px;height:15px;background:#d4d0c8"></div><div class="ab" style="left:1357px;top:232px;width:1px;height:15px;background:#d4d0c8"></div><div class="ab" style="left:1382px;top:232px;width:1px;height:15px;background:#d4d0c8"></div><div class="ab" style="left:1442px;top:232px;width:1px;height:15px;background:#d4d0c8"></div><div class="ab" style="left:1517px;top:232px;width:1px;height:15px;background:#d4d0c8"></div><div class="t " style="left:209px;top:232px;line-height:14px;color:#000;letter-spacing:-0.22px">Orlando (FL)</div><div class="t " style="left:284px;top:232px;line-height:14px;color:#000;letter-spacing:-0.11px">Sheraton Vistana Resort</div><div class="t ls" style="left:582px;top:232px;line-height:14px;color:#000">4*</div><div class="t " style="left:622px;top:232px;line-height:14px;color:#000;letter-spacing:-0.33px">Roomonly</div><div class="t " style="left:697px;top:232px;line-height:14px;color:#000;letter-spacing:0.13px">Standard, 2 Be...</div><div class="t " style="left:787px;top:232px;line-height:14px;color:#000;letter-spacing:-0.20px">Mon</div><div class="t " style="left:822px;top:232px;line-height:14px;color:#000">19/06/2017</div><div class="t " style="left:890px;top:232px;line-height:14px;color:#000;letter-spacing:0.09px">Fri</div><div class="t " style="left:925px;top:232px;line-height:14px;color:#000">23/06/2017</div><div class="t " style="left:993px;top:232px;line-height:14px;color:#000;letter-spacing:0.28px">Tourico ...</div><div class="t " style="left:1127px;top:232px;width:52px;text-align:right;line-height:14px;color:#000">757.31</div><div class="t " style="left:1182px;top:232px;width:52px;text-align:right;line-height:14px;color:#000">378.66</div><div class="t " style="left:1237px;top:232px;width:62px;text-align:right;line-height:14px;color:#000">757.31</div><div class="t " style="left:1302px;top:232px;width:52px;text-align:right;line-height:14px;color:#000">0.00</div><div class="t " style="left:1385px;top:232px;line-height:14px;color:#000;letter-spacing:-1.06px">XML</div><div class="ab" style="left:207px;top:247px;width:1310px;height:15px;background:#bddfff"></div><div class="ab" style="left:207px;top:261px;width:1381px;height:1px;background:#d4d0c8"></div><div class="ab" style="left:281px;top:247px;width:1px;height:15px;background:#d4d0c8"></div><div class="ab" style="left:579px;top:247px;width:1px;height:15px;background:#d4d0c8"></div><div class="ab" style="left:619px;top:247px;width:1px;height:15px;background:#d4d0c8"></div><div class="ab" style="left:694px;top:247px;width:1px;height:15px;background:#d4d0c8"></div><div class="ab" style="left:784px;top:247px;width:1px;height:15px;background:#d4d0c8"></div><div class="ab" style="left:819px;top:247px;width:1px;height:15px;background:#d4d0c8"></div><div class="ab" style="left:887px;top:247px;width:1px;height:15px;background:#d4d0c8"></div><div class="ab" style="left:922px;top:247px;width:1px;height:15px;background:#d4d0c8"></div><div class="ab" style="left:990px;top:247px;width:1px;height:15px;background:#d4d0c8"></div><div class="ab" style="left:1052px;top:247px;width:1px;height:15px;background:#d4d0c8"></div><div class="ab" style="left:1077px;top:247px;width:1px;height:15px;background:#d4d0c8"></div><div class="ab" style="left:1102px;top:247px;width:1px;height:15px;background:#d4d0c8"></div><div class="ab" style="left:1127px;top:247px;width:1px;height:15px;background:#d4d0c8"></div><div class="ab" style="left:1182px;top:247px;width:1px;height:15px;background:#d4d0c8"></div><div class="ab" style="left:1237px;top:247px;width:1px;height:15px;background:#d4d0c8"></div><div class="ab" style="left:1302px;top:247px;width:1px;height:15px;background:#d4d0c8"></div><div class="ab" style="left:1357px;top:247px;width:1px;height:15px;background:#d4d0c8"></div><div class="ab" style="left:1382px;top:247px;width:1px;height:15px;background:#d4d0c8"></div><div class="ab" style="left:1442px;top:247px;width:1px;height:15px;background:#d4d0c8"></div><div class="ab" style="left:1517px;top:247px;width:1px;height:15px;background:#d4d0c8"></div><div class="t " style="left:209px;top:247px;line-height:14px;color:#000;letter-spacing:0.24px">Orlando Int...</div><div class="t " style="left:284px;top:247px;line-height:14px;color:#000;letter-spacing:-0.23px">Sheraton Vistana Villages</div><div class="t " style="left:582px;top:247px;line-height:14px;color:#000">4.0</div><div class="t " style="left:622px;top:247px;line-height:14px;color:#000;letter-spacing:-0.29px">Room Only</div><div class="t " style="left:697px;top:247px;line-height:14px;color:#000;letter-spacing:-0.11px">2 Bedroom Villa...</div><div class="t " style="left:787px;top:247px;line-height:14px;color:#000;letter-spacing:-0.20px">Mon</div><div class="t " style="left:822px;top:247px;line-height:14px;color:#000">19/06/2017</div><div class="t " style="left:890px;top:247px;line-height:14px;color:#000;letter-spacing:0.09px">Fri</div><div class="t " style="left:925px;top:247px;line-height:14px;color:#000">23/06/2017</div><div class="t " style="left:993px;top:247px;line-height:14px;color:#000;letter-spacing:-0.07px">Get A Bed</div><div class="t " style="left:1127px;top:247px;width:52px;text-align:right;line-height:14px;color:#000">762.70</div><div class="t " style="left:1182px;top:247px;width:52px;text-align:right;line-height:14px;color:#000">381.35</div><div class="t " style="left:1237px;top:247px;width:62px;text-align:right;line-height:14px;color:#000">762.70</div><div class="t " style="left:1302px;top:247px;width:52px;text-align:right;line-height:14px;color:#000">0.00</div><div class="t " style="left:1385px;top:247px;line-height:14px;color:#000;letter-spacing:-1.06px">XML</div><div class="ab" style="left:207px;top:262px;width:1310px;height:15px;background:#bddfff"></div><div class="ab" style="left:207px;top:276px;width:1381px;height:1px;background:#d4d0c8"></div><div class="ab" style="left:281px;top:262px;width:1px;height:15px;background:#d4d0c8"></div><div class="ab" style="left:579px;top:262px;width:1px;height:15px;background:#d4d0c8"></div><div class="ab" style="left:619px;top:262px;width:1px;height:15px;background:#d4d0c8"></div><div class="ab" style="left:694px;top:262px;width:1px;height:15px;background:#d4d0c8"></div><div class="ab" style="left:784px;top:262px;width:1px;height:15px;background:#d4d0c8"></div><div class="ab" style="left:819px;top:262px;width:1px;height:15px;background:#d4d0c8"></div><div class="ab" style="left:887px;top:262px;width:1px;height:15px;background:#d4d0c8"></div><div class="ab" style="left:922px;top:262px;width:1px;height:15px;background:#d4d0c8"></div><div class="ab" style="left:990px;top:262px;width:1px;height:15px;background:#d4d0c8"></div><div class="ab" style="left:1052px;top:262px;width:1px;height:15px;background:#d4d0c8"></div><div class="ab" style="left:1077px;top:262px;width:1px;height:15px;background:#d4d0c8"></div><div class="ab" style="left:1102px;top:262px;width:1px;height:15px;background:#d4d0c8"></div><div class="ab" style="left:1127px;top:262px;width:1px;height:15px;background:#d4d0c8"></div><div class="ab" style="left:1182px;top:262px;width:1px;height:15px;background:#d4d0c8"></div><div class="ab" style="left:1237px;top:262px;width:1px;height:15px;background:#d4d0c8"></div><div class="ab" style="left:1302px;top:262px;width:1px;height:15px;background:#d4d0c8"></div><div class="ab" style="left:1357px;top:262px;width:1px;height:15px;background:#d4d0c8"></div><div class="ab" style="left:1382px;top:262px;width:1px;height:15px;background:#d4d0c8"></div><div class="ab" style="left:1442px;top:262px;width:1px;height:15px;background:#d4d0c8"></div><div class="ab" style="left:1517px;top:262px;width:1px;height:15px;background:#d4d0c8"></div><div class="t " style="left:209px;top:262px;line-height:14px;color:#000;letter-spacing:0.24px">Orlando Int...</div><div class="t " style="left:284px;top:262px;line-height:14px;color:#000;letter-spacing:-0.23px">Sheraton Vistana Villages</div><div class="t " style="left:582px;top:262px;line-height:14px;color:#000">4.0</div><div class="t " style="left:622px;top:262px;line-height:14px;color:#000;letter-spacing:-0.29px">Room Only</div><div class="t " style="left:697px;top:262px;line-height:14px;color:#000;letter-spacing:-0.11px">2 Bedroom Villa...</div><div class="t " style="left:787px;top:262px;line-height:14px;color:#000;letter-spacing:-0.20px">Mon</div><div class="t " style="left:822px;top:262px;line-height:14px;color:#000">19/06/2017</div><div class="t " style="left:890px;top:262px;line-height:14px;color:#000;letter-spacing:0.09px">Fri</div><div class="t " style="left:925px;top:262px;line-height:14px;color:#000">23/06/2017</div><div class="t " style="left:993px;top:262px;line-height:14px;color:#000;letter-spacing:-0.07px">Get A Bed</div><div class="t " style="left:1127px;top:262px;width:52px;text-align:right;line-height:14px;color:#000">762.70</div><div class="t " style="left:1182px;top:262px;width:52px;text-align:right;line-height:14px;color:#000">381.35</div><div class="t " style="left:1237px;top:262px;width:62px;text-align:right;line-height:14px;color:#000">762.70</div><div class="t " style="left:1302px;top:262px;width:52px;text-align:right;line-height:14px;color:#000">0.00</div><div class="t " style="left:1385px;top:262px;line-height:14px;color:#000;letter-spacing:-1.06px">XML</div><div class="ab" style="left:207px;top:277px;width:1310px;height:15px;background:#bddfff"></div><div class="ab" style="left:207px;top:291px;width:1381px;height:1px;background:#d4d0c8"></div><div class="ab" style="left:281px;top:277px;width:1px;height:15px;background:#d4d0c8"></div><div class="ab" style="left:579px;top:277px;width:1px;height:15px;background:#d4d0c8"></div><div class="ab" style="left:619px;top:277px;width:1px;height:15px;background:#d4d0c8"></div><div class="ab" style="left:694px;top:277px;width:1px;height:15px;background:#d4d0c8"></div><div class="ab" style="left:784px;top:277px;width:1px;height:15px;background:#d4d0c8"></div><div class="ab" style="left:819px;top:277px;width:1px;height:15px;background:#d4d0c8"></div><div class="ab" style="left:887px;top:277px;width:1px;height:15px;background:#d4d0c8"></div><div class="ab" style="left:922px;top:277px;width:1px;height:15px;background:#d4d0c8"></div><div class="ab" style="left:990px;top:277px;width:1px;height:15px;background:#d4d0c8"></div><div class="ab" style="left:1052px;top:277px;width:1px;height:15px;background:#d4d0c8"></div><div class="ab" style="left:1077px;top:277px;width:1px;height:15px;background:#d4d0c8"></div><div class="ab" style="left:1102px;top:277px;width:1px;height:15px;background:#d4d0c8"></div><div class="ab" style="left:1127px;top:277px;width:1px;height:15px;background:#d4d0c8"></div><div class="ab" style="left:1182px;top:277px;width:1px;height:15px;background:#d4d0c8"></div><div class="ab" style="left:1237px;top:277px;width:1px;height:15px;background:#d4d0c8"></div><div class="ab" style="left:1302px;top:277px;width:1px;height:15px;background:#d4d0c8"></div><div class="ab" style="left:1357px;top:277px;width:1px;height:15px;background:#d4d0c8"></div><div class="ab" style="left:1382px;top:277px;width:1px;height:15px;background:#d4d0c8"></div><div class="ab" style="left:1442px;top:277px;width:1px;height:15px;background:#d4d0c8"></div><div class="ab" style="left:1517px;top:277px;width:1px;height:15px;background:#d4d0c8"></div><div class="t " style="left:209px;top:277px;line-height:14px;color:#000;letter-spacing:-0.22px">Orlando (FL)</div><div class="t " style="left:284px;top:277px;line-height:14px;color:#000;letter-spacing:-0.11px">Sheraton Vistana Resort</div><div class="t ls" style="left:582px;top:277px;line-height:14px;color:#000">4*</div><div class="t " style="left:622px;top:277px;line-height:14px;color:#000;letter-spacing:-0.33px">Roomonly</div><div class="t " style="left:697px;top:277px;line-height:14px;color:#000;letter-spacing:-0.11px">2 Bedroom Villa...</div><div class="t " style="left:787px;top:277px;line-height:14px;color:#000;letter-spacing:-0.20px">Mon</div><div class="t " style="left:822px;top:277px;line-height:14px;color:#000">19/06/2017</div><div class="t " style="left:890px;top:277px;line-height:14px;color:#000;letter-spacing:0.09px">Fri</div><div class="t " style="left:925px;top:277px;line-height:14px;color:#000">23/06/2017</div><div class="t " style="left:993px;top:277px;line-height:14px;color:#000;letter-spacing:0.28px">Tourico ...</div><div class="t " style="left:1127px;top:277px;width:52px;text-align:right;line-height:14px;color:#000">1,473.56</div><div class="t " style="left:1182px;top:277px;width:52px;text-align:right;line-height:14px;color:#000">736.78</div><div class="t " style="left:1237px;top:277px;width:62px;text-align:right;line-height:14px;color:#000">1,473.56</div><div class="t " style="left:1302px;top:277px;width:52px;text-align:right;line-height:14px;color:#000">0.00</div><div class="t " style="left:1385px;top:277px;line-height:14px;color:#000;letter-spacing:-1.06px">XML</div><div class="ab" style="left:207px;top:292px;width:1310px;height:15px;background:#bddfff"></div><div class="ab" style="left:207px;top:306px;width:1381px;height:1px;background:#d4d0c8"></div><div class="ab" style="left:281px;top:292px;width:1px;height:15px;background:#d4d0c8"></div><div class="ab" style="left:579px;top:292px;width:1px;height:15px;background:#d4d0c8"></div><div class="ab" style="left:619px;top:292px;width:1px;height:15px;background:#d4d0c8"></div><div class="ab" style="left:694px;top:292px;width:1px;height:15px;background:#d4d0c8"></div><div class="ab" style="left:784px;top:292px;width:1px;height:15px;background:#d4d0c8"></div><div class="ab" style="left:819px;top:292px;width:1px;height:15px;background:#d4d0c8"></div><div class="ab" style="left:887px;top:292px;width:1px;height:15px;background:#d4d0c8"></div><div class="ab" style="left:922px;top:292px;width:1px;height:15px;background:#d4d0c8"></div><div class="ab" style="left:990px;top:292px;width:1px;height:15px;background:#d4d0c8"></div><div class="ab" style="left:1052px;top:292px;width:1px;height:15px;background:#d4d0c8"></div><div class="ab" style="left:1077px;top:292px;width:1px;height:15px;background:#d4d0c8"></div><div class="ab" style="left:1102px;top:292px;width:1px;height:15px;background:#d4d0c8"></div><div class="ab" style="left:1127px;top:292px;width:1px;height:15px;background:#d4d0c8"></div><div class="ab" style="left:1182px;top:292px;width:1px;height:15px;background:#d4d0c8"></div><div class="ab" style="left:1237px;top:292px;width:1px;height:15px;background:#d4d0c8"></div><div class="ab" style="left:1302px;top:292px;width:1px;height:15px;background:#d4d0c8"></div><div class="ab" style="left:1357px;top:292px;width:1px;height:15px;background:#d4d0c8"></div><div class="ab" style="left:1382px;top:292px;width:1px;height:15px;background:#d4d0c8"></div><div class="ab" style="left:1442px;top:292px;width:1px;height:15px;background:#d4d0c8"></div><div class="ab" style="left:1517px;top:292px;width:1px;height:15px;background:#d4d0c8"></div><div class="t " style="left:209px;top:292px;line-height:14px;color:#000;letter-spacing:-0.22px">Orlando (FL)</div><div class="t " style="left:284px;top:292px;line-height:14px;color:#000;letter-spacing:-0.11px">Sheraton Vistana Resort</div><div class="t ls" style="left:582px;top:292px;line-height:14px;color:#000">4*</div><div class="t " style="left:622px;top:292px;line-height:14px;color:#000;letter-spacing:-0.33px">Roomonly</div><div class="t " style="left:697px;top:292px;line-height:14px;color:#000;letter-spacing:-0.11px">2 Bedroom Villa...</div><div class="t " style="left:787px;top:292px;line-height:14px;color:#000;letter-spacing:-0.20px">Mon</div><div class="t " style="left:822px;top:292px;line-height:14px;color:#000">19/06/2017</div><div class="t " style="left:890px;top:292px;line-height:14px;color:#000;letter-spacing:0.09px">Fri</div><div class="t " style="left:925px;top:292px;line-height:14px;color:#000">23/06/2017</div><div class="t " style="left:993px;top:292px;line-height:14px;color:#000;letter-spacing:0.28px">Tourico ...</div><div class="t " style="left:1127px;top:292px;width:52px;text-align:right;line-height:14px;color:#000">1,531.99</div><div class="t " style="left:1182px;top:292px;width:52px;text-align:right;line-height:14px;color:#000">766.00</div><div class="t " style="left:1237px;top:292px;width:62px;text-align:right;line-height:14px;color:#000">1,531.99</div><div class="t " style="left:1302px;top:292px;width:52px;text-align:right;line-height:14px;color:#000">0.00</div><div class="t " style="left:1385px;top:292px;line-height:14px;color:#000;letter-spacing:-1.06px">XML</div><div class="t " style="left:209px;top:783px;;letter-spacing:0.05px">First portion: 8.5 sec, total search time: 11.8 sec</div><div class="ab" style="left:1560px;top:778px;width:23px;height:22px;background:#d4d0c8;border-top:1px solid #fff;border-left:1px solid #fff;border-right:1px solid #404040;border-bottom:1px solid #404040;box-shadow:inset -1px -1px 0 #808080"></div><svg class="ab" style="left:1568px;top:782px" width="7" height="13" viewBox="0 0 7 13"><rect x="1.5" y="1" width="3" height="2.6" rx="0.8" fill="#1452a8"/><path d="M0.5 4.5 H4.5 V10.5 H5.8 V12 H0.3 V10.5 H1.8 V6 H0.5Z" fill="#1452a8"/></svg><div class="ab" style="left:202px;top:805px;width:1391px;height:1px;background:#808080"></div><div class="ab" style="left:202px;top:806px;width:53px;height:17px;background:#d4d0c8;"></div><div class="ab" style="left:254px;top:806px;width:1px;height:17px;background:#909090"></div><div class="t " style="left:206px;top:808px;color:#000;letter-spacing:-0.44px">Summary</div><div class="ab" style="left:255px;top:806px;width:41px;height:17px;background:#d4d0c8;"></div><div class="ab" style="left:295px;top:806px;width:1px;height:17px;background:#909090"></div><div class="t " style="left:259px;top:808px;color:#000;letter-spacing:-0.38px">Search</div><div class="ab" style="left:296px;top:806px;width:66px;height:17px;background:#008000;border-radius:0 0 3px 3px;"></div><div class="ab" style="left:361px;top:806px;width:1px;height:17px;background:#909090"></div><div class="t " style="left:300px;top:808px;color:#fff;letter-spacing:-0.44px">Acc 2A MCO</div><div class="ab" style="left:362px;top:806px;width:69px;height:17px;background:#ccffcc;"></div><div class="ab" style="left:430px;top:806px;width:1px;height:17px;background:#909090"></div><div class="t " style="left:366px;top:808px;color:#000;letter-spacing:-0.18px">Car MCO; 5d</div><div class="ab" style="left:431px;top:806px;width:47px;height:17px;background:#ccffcc;"></div><div class="ab" style="left:477px;top:806px;width:1px;height:17px;background:#909090"></div><div class="t " style="left:435px;top:808px;color:#000;letter-spacing:0.01px">Tour 2A</div><div class="ab" style="left:478px;top:806px;width:75px;height:17px;background:#c8c8ff;"></div><div class="ab" style="left:552px;top:806px;width:1px;height:17px;background:#909090"></div><div class="t " style="left:482px;top:808px;color:#000;letter-spacing:-0.22px">Car MCO; 12d</div><div class="ab" style="left:553px;top:806px;width:46px;height:17px;background:#c8c8ff;"></div><div class="ab" style="left:598px;top:806px;width:1px;height:17px;background:#909090"></div><div class="t " style="left:557px;top:808px;color:#000;letter-spacing:0.01px">Tour 2A</div><div class="ab" style="left:599px;top:806px;width:97px;height:17px;background:#d4d0c8;"></div><div class="ab" style="left:695px;top:806px;width:1px;height:17px;background:#909090"></div><div class="t " style="left:603px;top:808px;color:#000;letter-spacing:-0.37px">Financial Summary</div><div class="t " style="left:776px;top:832px;;letter-spacing:0.01px">User: 263 - Anthony Lynch</div><div class="t " style="left:916px;top:832px;;letter-spacing:-0.08px">Retailer: 'Ocean-Florida'</div><div class="t " style="left:1042px;top:832px;;letter-spacing:0.02px">Client: none</div><div class="t " style="left:1540px;top:832px;;letter-spacing:-0.32px">18:51 GMT</div><div class="ab" style="left:0px;top:858px;width:1600px;height:2px;background:#404040"></div></body></html>
